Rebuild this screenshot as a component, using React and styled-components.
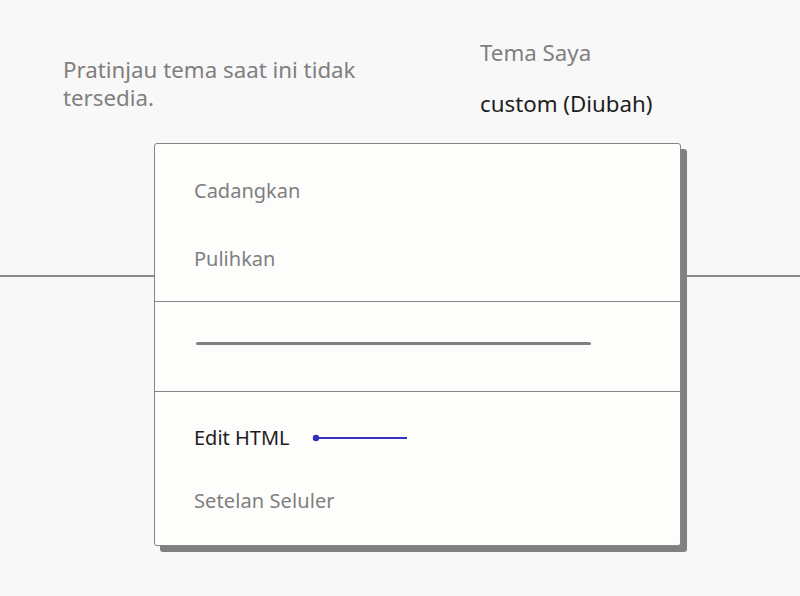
import styled, { createGlobalStyle } from "styled-components";

const GlobalStyle = createGlobalStyle`
  html, body {
    margin: 0;
    padding: 0;
    background: #f8f8f8;
  }
  body {
    font-family: "Noto Sans", "Open Sans", sans-serif;
  }
`;

const Page = styled.div`
  width: 800px;
  height: 596px;
  overflow: hidden;
  background: #f8f8f8;
`;

const Header = styled.div`
  display: grid;
  grid-template-columns: 417px 1fr;
  padding-left: 63px;
  padding-top: 39px;
  height: 104px;
`;

const Notice = styled.p`
  margin: 17px 0 0;
  width: 320px;
  font-size: 22.3px;
  line-height: 28px;
  color: #7f7f7f;
`;

const ThemeInfo = styled.div`
  display: flex;
  flex-direction: column;
  gap: 23px;
`;

const ThemeLabel = styled.div`
  font-size: 22.3px;
  line-height: 28px;
  color: ${(p) => (p.$muted ? "#7f7f7f" : "#1e1e1e")};
`;

const Stage = styled.div`
  padding-left: 154px;
  background: linear-gradient(
    to bottom,
    transparent 132px,
    #8a8a8a 132px,
    #8a8a8a 134px,
    transparent 134px
  );
`;

const Card = styled.div`
  width: 525px;
  background: #fdfdfb;
  border: 1.5px solid #858585;
  border-radius: 3px;
  box-shadow: 6px 6px 0 #808080;
`;

const Section = styled.div`
  display: flex;
  flex-direction: column;
  padding: ${(p) => p.$pad || "0"};
  border-top: ${(p) => (p.$divided ? "1.5px solid #858585" : "none")};
  height: ${(p) => p.$height || "auto"};
  box-sizing: border-box;
`;

const Item = styled.div`
  display: flex;
  align-items: center;
  gap: 22px;
  height: ${(p) => p.$h}px;
  padding-left: 39px;
  font-size: 20px;
  letter-spacing: ${(p) => p.$spacing || "0"};
  color: ${(p) => (p.$active ? "#1e1e1e" : "#7f7f7f")};
`;

const Bar = styled.div`
  margin: 40px 0 0 41px;
  width: 395px;
  height: 3px;
  border-radius: 2px;
  background: #808080;
`;

const Pointer = () => (
  <svg width="96" height="8" viewBox="0 0 96 8">
    <circle cx="4" cy="4" r="3.2" fill="#2f2fc0" />
    <line x1="4" y1="4" x2="95" y2="4" stroke="#3434c0" strokeWidth="2" />
  </svg>
);

export default function App() {
  return (
    <>
      <GlobalStyle />
      <Page>
        <Header>
          <Notice>Pratinjau tema saat ini tidak tersedia.</Notice>
          <ThemeInfo>
            <ThemeLabel $muted>Tema Saya</ThemeLabel>
            <ThemeLabel>custom (Diubah)</ThemeLabel>
          </ThemeInfo>
        </Header>
        <Stage>
          <Card>
            <Section $pad="12px 0 9px">
              <Item $h={68}>Cadangkan</Item>
              <Item $h={68}>Pulihkan</Item>
            </Section>
            <Section $divided $height="90px">
              <Bar />
            </Section>
            <Section $divided $pad="14px 0 13px">
              <Item $h={63} $active>
                Edit HTML
                <Pointer />
              </Item>
              <Item $h={63} $spacing="0.1px">Setelan Seluler</Item>
            </Section>
          </Card>
        </Stage>
      </Page>
    </>
  );
}
